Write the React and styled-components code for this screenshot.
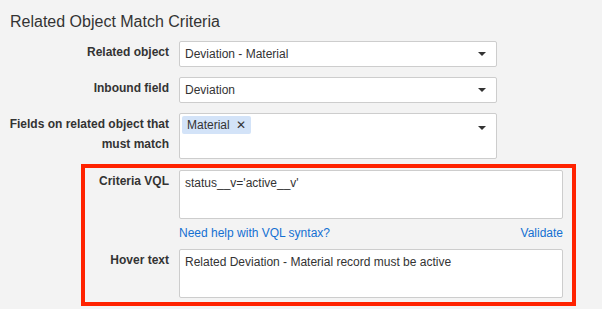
import React from "react";
import styled, { createGlobalStyle } from "styled-components";

const GlobalStyle = createGlobalStyle`
  html, body {
    margin: 0;
    padding: 0;
    background: #f3f3f3;
  }
  body {
    font-family: "Liberation Sans", Arial, Helvetica, sans-serif;
    color: #333;
  }
`;

const Page = styled.div`
  width: 602px;
  height: 309px;
  overflow: hidden;
  background: #f3f3f3;
`;

const Title = styled.h2`
  margin: 0;
  padding: 12px 0 0 10px;
  font-size: 16px;
  line-height: 20px;
  font-weight: normal;
  color: #333;
`;

const Form = styled.div`
  display: flex;
  flex-direction: column;
  margin-top: 9px;
`;

const Row = styled.div`
  display: grid;
  grid-template-columns: 160px 318px;
  column-gap: 10px;
  padding-left: 9px;
  margin-bottom: ${(p) => (p.$tight ? "5px" : "10px")};
`;

const Label = styled.div`
  text-align: right;
  font-size: 12px;
  font-weight: bold;
  line-height: 20px;
  padding-top: 1px;
  color: #333;
`;

const Select = styled.div`
  box-sizing: border-box;
  height: ${(p) => p.$height || 26}px;
  background: #fff;
  border: 1px solid #cdcdcd;
  border-radius: 2px;
  display: flex;
  align-items: ${(p) => (p.$multi ? "flex-start" : "center")};
  padding: ${(p) => (p.$multi ? "2px 10px 2px 2px" : "0 10px 0 5px")};
  font-size: 12px;
  color: #333;
`;

const SelectValue = styled.span`
  flex: 1;
`;

const Caret = styled.span`
  width: 0;
  height: 0;
  border-left: 4px solid transparent;
  border-right: 4px solid transparent;
  border-top: 4px solid #333;
  margin-top: ${(p) => (p.$multi ? "10px" : "0")};
`;

const Tokens = styled.div`
  flex: 1;
  display: flex;
  gap: 4px;
`;

const Token = styled.span`
  display: inline-flex;
  align-items: center;
  height: 18px;
  padding: 0 5px;
  gap: 6px;
  background: #d3e3f8;
  border-radius: 2px;
  font-size: 12px;
  color: #333;
`;

const TokenClose = styled.span`
  font-size: 12px;
  line-height: 1;
  color: #333;
`;

const Highlight = styled.div`
  box-sizing: border-box;
  width: 495px;
  margin-left: 81px;
  border: 4px solid #ff2200;
  padding: 2px 9px 4px 0;
  display: grid;
  grid-template-columns: 84px 384px;
  column-gap: 10px;
`;

const TextBox = styled.div`
  box-sizing: border-box;
  height: 49px;
  background: #fff;
  border: 1px solid #cdcdcd;
  border-radius: 2px;
  padding: 5px 5px;
  font-size: 12px;
  line-height: 15px;
  color: #333;
`;

const HelpRow = styled.div`
  display: flex;
  justify-content: space-between;
  margin: 5px 0 6px;
  font-size: 12px;
  line-height: 19px;
`;

const Link = styled.a`
  color: #1470d2;
  text-decoration: none;
  cursor: pointer;
`;

const Divider = styled.div`
  margin: 3px 0 0 9px;
  height: 2px;
  background: #dcdcdc;
`;

export default function App() {
  return (
    <Page>
      <GlobalStyle />
      <Title>Related Object Match Criteria</Title>
      <Form>
        <Row>
          <Label>Related object</Label>
          <Select>
            <SelectValue>Deviation - Material</SelectValue>
            <Caret />
          </Select>
        </Row>
        <Row>
          <Label>Inbound field</Label>
          <Select>
            <SelectValue>Deviation</SelectValue>
            <Caret />
          </Select>
        </Row>
        <Row $tight>
          <Label>
            Fields on related object that
            <br />
            must match
          </Label>
          <Select $multi $height={46}>
            <Tokens>
              <Token>
                Material<TokenClose>✕</TokenClose>
              </Token>
            </Tokens>
            <Caret $multi />
          </Select>
        </Row>
        <Highlight>
          <Label>Criteria VQL</Label>
          <TextBox>status__v='active__v'</TextBox>
          <div />
          <HelpRow>
            <Link>Need help with VQL syntax?</Link>
            <Link>Validate</Link>
          </HelpRow>
          <Label>Hover text</Label>
          <TextBox>Related Deviation - Material record must be active</TextBox>
        </Highlight>
      </Form>
      <Divider />
    </Page>
  );
}
